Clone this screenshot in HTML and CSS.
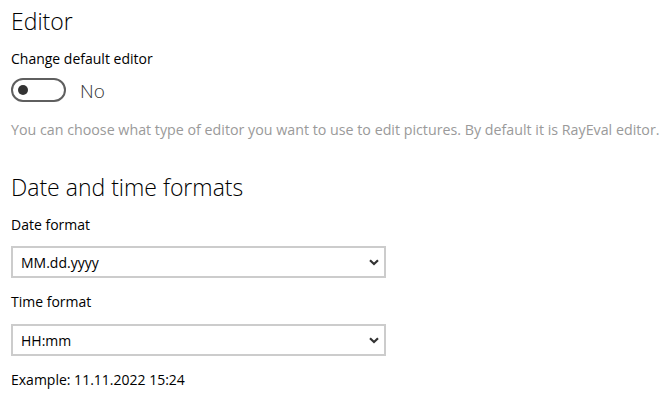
FILE: index.html
```html
<!DOCTYPE html>
<html>
<head>
<meta charset="utf-8">
<link rel="stylesheet" href="styles.css">
</head>
<body>
<div class="page">
  <h1 class="heading">Editor</h1>
  <div class="label">Change default editor</div>
  <div class="toggle-row">
    <div class="toggle"><div class="knob"></div></div>
    <span class="toggle-text">No</span>
  </div>
  <p class="hint">You can choose what type of editor you want to use to edit pictures. By default it is RayEval editor.</p>

  <h1 class="heading heading-2">Date and time formats</h1>
  <div class="label">Date format</div>
  <div class="select">
    <span>MM.dd.yyyy</span>
    <svg class="chev" width="10" height="7" viewBox="0 0 10 7"><path d="M1 1.2 L5 5 L9 1.2" fill="none" stroke="#333" stroke-width="2.2"/></svg>
  </div>
  <div class="label label-2">Time format</div>
  <div class="select select-2">
    <span>HH:mm</span>
    <svg class="chev" width="10" height="7" viewBox="0 0 10 7"><path d="M1 1.2 L5 5 L9 1.2" fill="none" stroke="#333" stroke-width="2.2"/></svg>
  </div>
  <div class="example">Example: 11.11.2022 15:24</div>
</div>
</body>
</html>
```

FILE: styles.css
```css
html, body {
  margin: 0;
  padding: 0;
  background: #ffffff;
}
.page {
  padding: 0 11px;
  font-family: "Open Sans", "Noto Sans", "Liberation Sans", sans-serif;
  color: #000;
  font-size: 14px;
}
.heading {
  margin: 0;
  padding-top: 4px;
  font-size: 23px;
  font-weight: 300;
  line-height: 34px;
  color: #000;
}
.heading-2 {
  padding-top: 0;
  margin-top: 30px;
}
.label {
  margin-top: 11px;
  line-height: 20px;
  font-size: 14px;
}
.toggle-row {
  display: flex;
  align-items: center;
  gap: 14px;
  margin-top: 8px;
}
.toggle {
  box-sizing: border-box;
  width: 55px;
  height: 24px;
  border: 2px solid #5f5f5f;
  border-radius: 12px;
  display: flex;
  align-items: center;
  padding-left: 5px;
}
.knob {
  width: 10px;
  height: 10px;
  border-radius: 50%;
  background: #333;
}
.toggle-text {
  font-size: 19px;
  font-weight: 300;
  color: #333;
  line-height: 24px;
  padding-top: 2px;
}
.hint {
  margin: 17px 0 0;
  color: #9a9a9a;
  font-size: 14.25px;
  line-height: 20px;
  white-space: nowrap;
}
.select {
  box-sizing: border-box;
  width: 375px;
  height: 32px;
  margin-top: 11px;
  border: 2px solid #cccccc;
  display: flex;
  align-items: center;
  justify-content: space-between;
  padding: 0 5px 0 8px;
  font-size: 14px;
}
.select-2 {
  margin-top: 12px;
}
.label-2 {
  margin-top: 14px;
}
.example {
  margin-top: 14px;
  line-height: 20px;
}
```
